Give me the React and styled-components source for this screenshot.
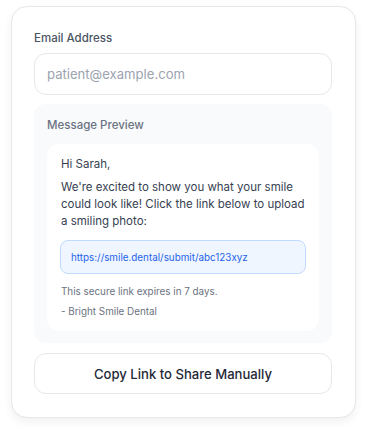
import styled, { createGlobalStyle } from 'styled-components'

const GlobalStyle = createGlobalStyle`
  html, body {
    margin: 0;
    padding: 0;
    background: #ffffff;
  }
  body {
    font-family: Inter, "Noto Sans", sans-serif;
    -webkit-font-smoothing: antialiased;
  }
`

const Page = styled.div`
  padding: 6px 11px 16px 11px;
`

const Card = styled.div`
  background: #ffffff;
  border: 1px solid #e5e7eb;
  border-radius: 16px;
  box-shadow: 0 4px 10px rgba(15, 23, 42, 0.06);
  padding: 23px 23px 23px 22px;
  display: flex;
  flex-direction: column;
`

const Label = styled.label`
  font-size: 11.5px;
  font-weight: 500;
  color: #4b5563;
  line-height: 16px;
  margin-bottom: 7px;
`

const Input = styled.input`
  box-sizing: border-box;
  width: 100%;
  height: 42px;
  border: 1px solid #e5e7eb;
  border-radius: 12px;
  padding: 0 12px;
  font-family: inherit;
  font-size: 13.1px;
  color: #111827;
  outline: none;
  &::placeholder {
    color: #9ca3af;
  }
`

const Preview = styled.div`
  margin-top: 9px;
  background: #f8fafc;
  border-radius: 12px;
  padding: 13px 13px 12px 13px;
`

const PreviewTitle = styled.div`
  font-size: 11.5px;
  font-weight: 500;
  color: #6b7280;
  line-height: 16px;
  margin-bottom: 11px;
`

const Message = styled.div`
  background: #ffffff;
  border-radius: 12px;
  padding: 12px 13px 13px 14px;
  color: #374151;
`

const Text = styled.p`
  margin: 0 0 ${p => p.$gap || 0}px 0;
  font-size: 11.5px;
  line-height: 17px;
`

const LinkBox = styled.div`
  background: #eff6ff;
  border: 1px solid #bfdbfe;
  border-radius: 8px;
  height: 34px;
  box-sizing: border-box;
  display: flex;
  align-items: center;
  padding: 0 10px;
  margin: 10px 0 10px -1px;
  font-size: 9.85px;
  color: #2563eb;
`

const Note = styled.p`
  margin: 0 0 ${p => p.$gap || 0}px 0;
  font-size: 9.85px;
  line-height: 14px;
  color: #6b7280;
`

const Button = styled.button`
  margin-top: 10px;
  height: 41px;
  box-sizing: border-box;
  border: 1px solid #e5e7eb;
  border-radius: 12px;
  background: #ffffff;
  font-family: inherit;
  font-size: 13.1px;
  font-weight: 500;
  color: #1f2937;
  cursor: pointer;
`

export default function App() {
  return (
    <>
      <GlobalStyle />
      <Page>
        <Card>
          <Label>Email Address</Label>
          <Input type="email" placeholder="patient@example.com" />
          <Preview>
            <PreviewTitle>Message Preview</PreviewTitle>
            <Message>
              <Text $gap={6}>Hi Sarah,</Text>
              <Text>
                We're excited to show you what your smile could look like! Click the link below to upload a smiling photo:
              </Text>
              <LinkBox>https://smile.dental/submit/abc123xyz</LinkBox>
              <Note $gap={6}>This secure link expires in 7 days.</Note>
              <Note>- Bright Smile Dental</Note>
            </Message>
          </Preview>
          <Button>Copy Link to Share Manually</Button>
        </Card>
      </Page>
    </>
  )
}
